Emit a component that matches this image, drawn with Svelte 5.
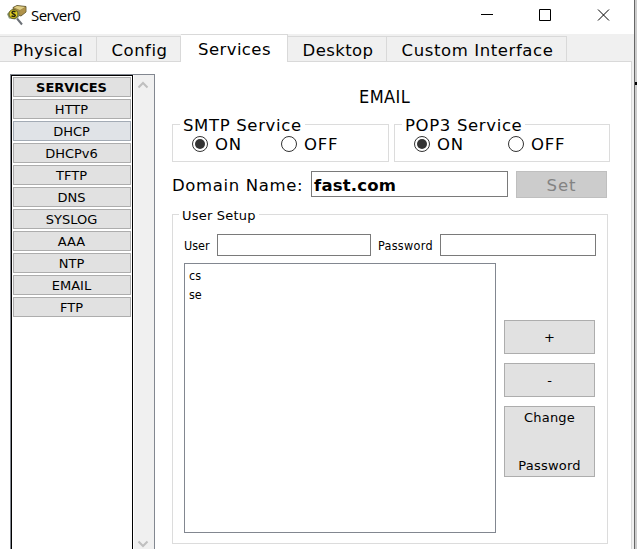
<script>
  const tabs = [
    { name: 'Physical', w: 97, gap: 0.4 },
    { name: 'Config', w: 84, gap: 0.5 },
    { name: 'Services', w: 107, gap: 0.4 },
    { name: 'Desktop', w: 99, gap: 0.4 },
    { name: 'Custom Interface', w: 180, gap: 0.6 }
  ];
  const services = ['SERVICES', 'HTTP', 'DHCP', 'DHCPv6', 'TFTP', 'DNS', 'SYSLOG', 'AAA', 'NTP', 'EMAIL', 'FTP'];
  const users = ['cs', 'se'];
</script>

{#snippet radio(on, label)}
  <span class="radio">
    <svg width="18" height="18" viewBox="0 0 18 18">
      <circle cx="9" cy="9" r="7.5" fill="#fff" stroke="#333" />
      {#if on}<circle cx="9" cy="9" r="5" fill="#333" />{/if}
    </svg>
    <span>{label}</span>
  </span>
{/snippet}

<div class="screen">
  <div class="window">
    <header>
      <svg class="logo" width="20" height="21" viewBox="0 0 20 21">
        <path d="M6 2.5 10 .5 19 1.5V7L14 11 7 9Z" fill="#a08a48" stroke="#54491f" stroke-width=".8" />
        <path d="M7 2.5 10 1 18 2 13 5Z" fill="#e0cf86" />
        <path d="M13 5.5 18.5 2.2V7L13.5 10.5Z" fill="#b0924a" />
        <path d="M0 9 3 6 7 4.5 12 7 12 12 8 14.5 2 13.5Z" fill="#8d9a7a" />
        <circle cx="6.5" cy="9" r="4.5" fill="#dccb22" stroke="#57551f" stroke-width=".9" />
        <path d="M8.5 6.8C5.5 5.2 3.5 8 6.5 9S8.5 12.2 4.5 11" fill="none" stroke="#292811" stroke-width="1.5" />
        <path d="M10 13.5 15 19.5" stroke="#6b7076" stroke-width="2" />
      </svg>
      <span class="title">Server0</span>
      <svg class="controls" width="140" height="30" viewBox="0 0 140 30" fill="none" stroke="#000">
        <path d="M7 14.5H19M65.5 9.5H76.5V20.5H65.5ZM124 9.5 135 20.5M135 9.5 124 20.5" />
      </svg>
    </header>
    <nav>
      {#each tabs as tab, i}
        <div class="tab" class:active={i === 2} style="width:{tab.w}px;letter-spacing:{tab.gap}px"><span>{tab.name}</span></div>
      {/each}
      <div class="rest"></div>
    </nav>
    <main>
      <aside>
        <div class="list">
          {#each services as s, i}
            <button class:head={i === 0} class:hot={i === 2}>{s}</button>
          {/each}
        </div>
        <div class="scroll">
          <svg width="12" height="8" viewBox="0 0 12 8"><path d="M1.5 6.5 6 2 10.5 6.5" /></svg>
          <svg width="12" height="8" viewBox="0 0 12 8"><path d="M1.5 1.5 6 6 10.5 1.5" /></svg>
        </div>
      </aside>
      <section>
        <h1>EMAIL</h1>
        <div class="protocols">
          <div class="group smtp">
            <span class="legend">SMTP Service</span>
            <div class="radios">{@render radio(true, 'ON')}{@render radio(false, 'OFF')}</div>
          </div>
          <div class="group pop">
            <span class="legend">POP3 Service</span>
            <div class="radios">{@render radio(true, 'ON')}{@render radio(false, 'OFF')}</div>
          </div>
        </div>
        <div class="domain">
          <span class="dlabel">Domain Name:</span>
          <div class="field dfield"><span>fast.com</span></div>
          <button class="set">Set</button>
        </div>
        <div class="group setup">
          <span class="legend small">User Setup</span>
          <div class="creds">
            <span class="user">User</span>
            <div class="field ufield"></div>
            <span class="pass">Password</span>
            <div class="field pfield"></div>
          </div>
          <div class="body">
            <div class="users">
              {#each users as u}<div>{u}</div>{/each}
            </div>
            <div class="actions">
              <button>+</button>
              <button>-</button>
              <button class="change"><span>Change</span><span>Password</span></button>
            </div>
          </div>
        </div>
      </section>
    </main>
  </div>
  <div class="edge"><i></i></div>
</div>

<style>
  :global(body) { margin: 0; overflow: hidden; }
  .screen, .screen * { box-sizing: border-box; }
  .screen { width: 637px; height: 549px; display: flex; overflow: hidden; background: #fff; color: #000; font: 13px "DejaVu Sans", sans-serif; white-space: nowrap; }
  .window { width: 634px; display: flex; flex-direction: column; }
  .edge { width: 3px; border-left: 1px solid #666; background: #ccc; padding-top: 82px; margin: 0; }
  .edge i { display: block; height: 3px; background: #000; }
  svg { display: block; flex: none; }
  button { margin: 0; padding: 0; border: 1px solid #adadad; background: #e1e1e1; color: #000; font: inherit; }
  header { height: 34px; flex: none; display: flex; }
  .logo { margin: 5px 0 0 7px; }
  .title { font: 15px/30px "Open Sans", sans-serif; letter-spacing: -0.6px; margin-left: 4px; width: 100px; }
  .controls { margin-left: 343px; }
  nav { height: 28px; flex: none; display: flex; align-items: flex-end; background: #f0f0f0; }
  .tab { height: 26px; border: solid #d9d9d9; border-width: 1px 1px 1px 0; text-align: center; font-size: 16.5px; line-height: 27px; padding-left: 2px; }
  .tab:first-child { padding-left: 0; }
  .tab.active { height: 28px; border-left-width: 0; border-bottom: 0; background: #fff; line-height: 29px; padding-left: 1px; }
  .rest { flex: 1; height: 1px; background: #d9d9d9; margin-right: 2px; }
  main { width: 632px; height: 487px; display: flex; border-right: 1px solid #d9d9d9; box-shadow: 2px 0 #f0f0f0; }
  aside { width: 145px; height: 487px; margin: 12px 0 0 10px; flex: none; display: flex; border: 1px solid #828790; border-bottom: 0; }
  .list { width: 122px; border: 1px solid #000; border-bottom: 0; padding: 1px; display: flex; flex-direction: column; gap: 2px; }
  .list button { height: 20px; flex: none; line-height: 19px; padding-right: 1px; }
  .list .head { font-weight: bold; font-size: 13px; }
  .list .hot { background: #e0e3e7; border-color: #a3abb5; }
  .scroll { width: 20px; height: 473px; margin-left: 1px; background: #f0f0f0; display: flex; flex-direction: column; justify-content: space-between; padding: 6px 0 0 3px; box-shadow: 0 2px #f0f0f0; }
  .scroll path { fill: none; stroke: #bfbfbf; stroke-width: 2; }
  section { margin-left: 17px; width: 438px; display: flex; flex-direction: column; }
  h1 { margin: 22px 0 0 187px; height: 40px; font: 18px/26px "DejaVu Sans Condensed", "DejaVu Sans", sans-serif; letter-spacing: 0.4px; }
  .protocols { display: flex; gap: 5px; height: 40px; }
  .group { border: 1px solid #dcdcdc; display: flex; flex-direction: column; align-items: flex-start; }
  .smtp { width: 217px; height: 38px; }
  .pop { width: 216px; height: 38px; }
  .legend { background: #fff; font-size: 16.5px; letter-spacing: 0.65px; line-height: 21px; height: 20px; margin: -10px 0 0 7px; padding: 0 3px; flex: none; }
  .radios { display: flex; margin: 0 0 0 18px; }
  .radio { display: flex; font-size: 16.5px; letter-spacing: 0.8px; line-height: 20px; gap: 6px; width: 89px; }
  .pop .radio { width: 94px; }
  .domain { display: flex; margin-top: 7px; height: 27px; line-height: 29px; font-size: 16.5px; }
  .dlabel { width: 139px; letter-spacing: 0.65px; }
  .field { border: 1px solid #7a7a7a; background: #fff; }
  .dfield { width: 197px; height: 26px; line-height: 27px; padding-left: 2px; font-weight: bold; letter-spacing: 0.2px; }
  .set { width: 91px; height: 27px; margin-left: 8px; background: #ccc; border-color: #bfbfbf; color: #838383; font-size: 16.5px; letter-spacing: 1px; line-height: 27px; }
  .setup { width: 436px; height: 330px; margin-top: 16px; }
  .legend.small { font-size: 13px; margin-left: 6px; letter-spacing: 0.2px; }
  .creds { display: flex; height: 22px; margin: 9px 0 0 11px; font: 12.5px/23px "DejaVu Sans Condensed", "DejaVu Sans", sans-serif; }
  .user { width: 33px; }
  .ufield { width: 154px; }
  .pass { width: 62px; margin-left: 7px; letter-spacing: 0.3px; }
  .pfield { width: 156px; }
  .body { display: flex; margin: 7px 0 0 11px; }
  .users { width: 312px; height: 270px; border: 1px solid #828790; padding: 2px 0 0 4px; font: 12.5px/19px "DejaVu Sans Condensed", "DejaVu Sans", sans-serif; }
  .actions { width: 91px; margin: 57px 0 0 8px; display: flex; flex-direction: column; gap: 9px; }
  .actions button { height: 34px; }
  .actions .change { height: 71px; display: flex; flex-direction: column; justify-content: space-between; align-items: center; padding: 3px 0 2px; line-height: 16px; letter-spacing: 0.2px; }
</style>
